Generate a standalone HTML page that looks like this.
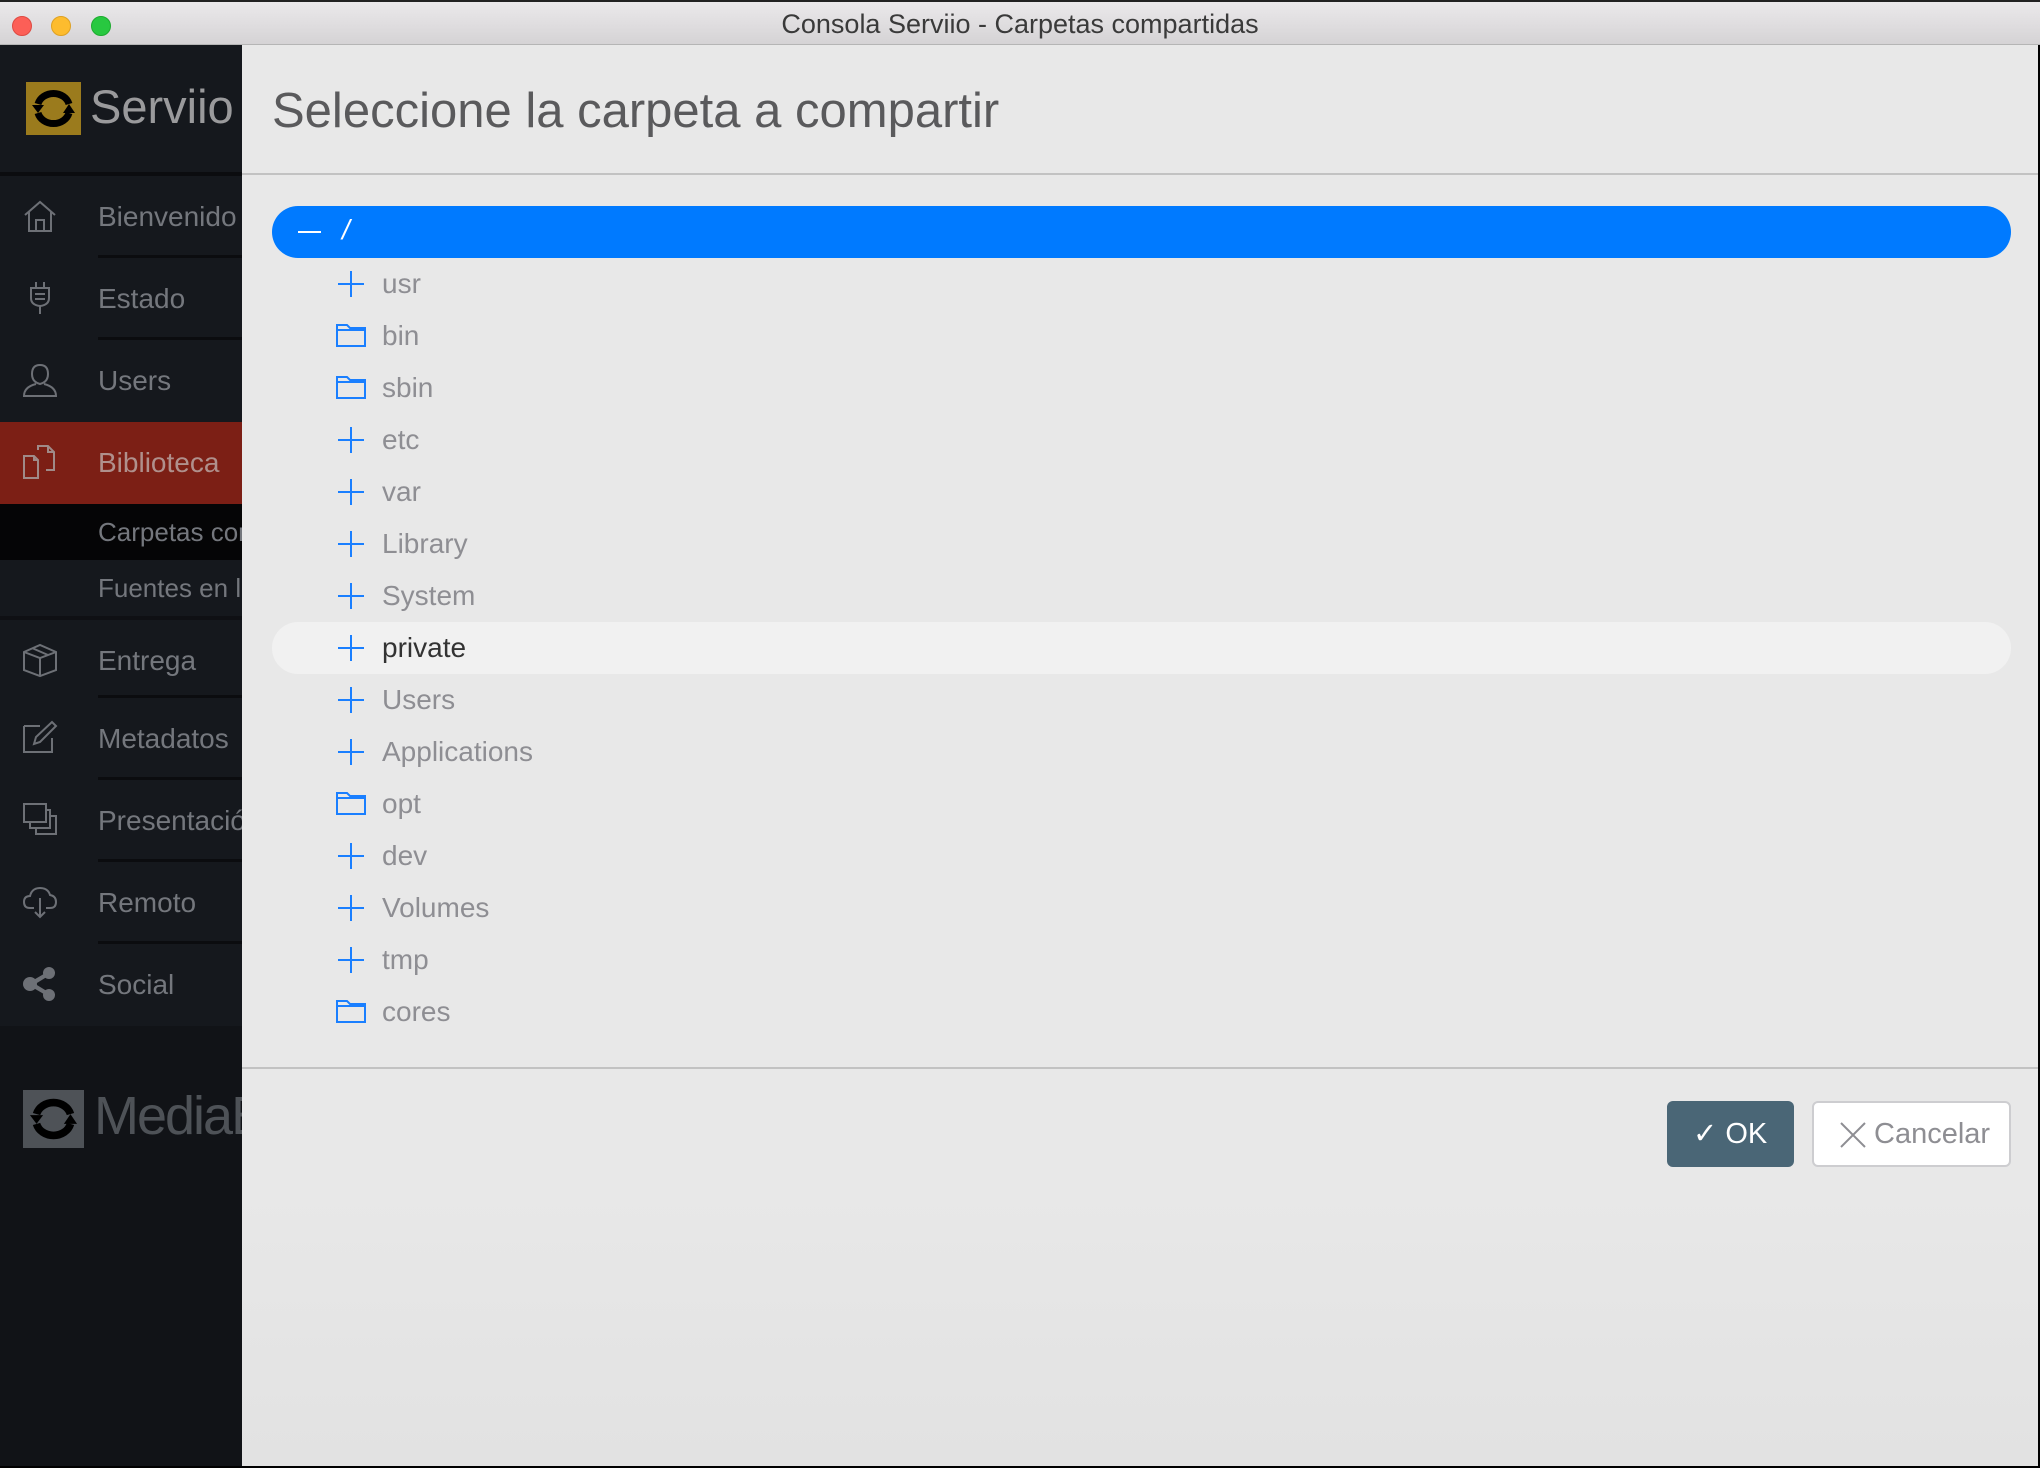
<!DOCTYPE html>
<html><head><meta charset="utf-8">
<style>
*{margin:0;padding:0;box-sizing:border-box}
body{width:2040px;height:1468px;overflow:hidden;background:#000;font-family:"Liberation Sans",sans-serif;position:relative}
.tb{position:absolute;left:0;top:0;width:2040px;height:45px;background:linear-gradient(#ebe9eb,#d5d3d5);border-bottom:1px solid #b5b5b5;border-top:2px solid #222}
.tb .t{position:absolute;left:0;right:0;top:7px;text-align:center;font-size:27px;color:#3a3a3a}
.dot{position:absolute;top:14px;width:20px;height:20px;border-radius:50%}
.side{position:absolute;left:0;top:45px;width:242px;height:1421px;background:#111317;overflow:hidden}
.hdr{position:absolute;left:0;top:0;width:242px;height:131px;background:#15181d;border-bottom:4px solid #0b0c0f}
.logo{position:absolute;left:26px;top:37px;width:55px;height:53px;background:#9b7b1d}
.brand{position:absolute;left:90px;top:34px;font-size:47px;color:#9a9a9c}
.nav{position:absolute;left:0;width:242px;height:82px;background:#15181d}
.nav .sep{position:absolute;left:98px;right:0;bottom:0;height:3px;background:#0b0c0f}
.nav .lbl{position:absolute;left:98px;top:25px;font-size:28px;color:#74777d;white-space:nowrap}
.nav svg{position:absolute;left:22px;top:22px}
.sub{position:absolute;left:0;width:242px;height:56px;background:#15181d}
.sub .lbl{position:absolute;left:98px;top:13px;font-size:26px;color:#74777d;white-space:nowrap}
.main{position:absolute;left:242px;top:45px;width:1796px;height:1421px;background:linear-gradient(#e8e8e8 80%,#e2e2e2)}
h1{position:absolute;left:30px;top:38px;font-weight:normal;font-size:49px;color:#5a5a5c}
.hl{position:absolute;left:0;right:0;height:2px;background:#c2c2c2}
.sel{position:absolute;left:30px;top:161px;width:1739px;height:52px;border-radius:26px;background:#007aff}
.row{position:absolute;left:30px;width:1739px;height:52px;border-radius:26px}
.row .lbl{position:absolute;left:110px;top:10px;font-size:28px;color:#8e8e93}
.row svg{position:absolute;left:64px;top:12px}
.btn{position:absolute;top:1056px;height:66px;border-radius:6px;font-size:29px}
</style></head><body>
<div class="tb">
<div class="dot" style="left:12px;background:#fc5f57;border:1px solid #de4a42"></div>
<div class="dot" style="left:51px;background:#fdbc2e;border:1px solid #dea123"></div>
<div class="dot" style="left:91px;background:#28c840;border:1px solid #1dab2f"></div>
<div class="t">Consola Serviio - Carpetas compartidas</div>
</div>
<div class="side">
<div class="hdr">
<div class="logo"><svg width="55" height="53" viewBox="0 0 55 53"><path d="M12 22 A16 14 0 0 1 43 22" fill="none" stroke="#000" stroke-width="7"/><path d="M43 31 A16 14 0 0 1 12 31" fill="none" stroke="#000" stroke-width="7"/><path d="M6 23 L12 31 L18 23Z M37 31 L43 22 L49 31Z" fill="#000"/></svg></div>
<div class="brand">Serviio</div>
</div>
<div class="nav" style="top:131px"><svg width="36" height="36" viewBox="0 0 36 36" fill="none" stroke="#6d7076" stroke-width="2"><path d="M3 17 L18 4 L33 17 M7 14 V33 H29 V14 M14 33 V22 H22 V33"/></svg><div class="lbl">Bienvenido</div><div class="sep"></div></div>
<div class="nav" style="top:213px"><svg width="36" height="36" viewBox="0 0 36 36" fill="none" stroke="#6d7076" stroke-width="2"><path d="M14 2 V8 M22 2 V8 M9 8 H27 V18 Q27 25 18 26 Q9 25 9 18Z M13 14 H23 M13 19 H23 M18 26 V34"/></svg><div class="lbl">Estado</div><div class="sep"></div></div>
<div class="nav" style="top:295px"><svg width="36" height="36" viewBox="0 0 36 36" fill="none" stroke="#6d7076" stroke-width="2"><path d="M18 3 Q26 3 26 12 Q26 20 18 22 Q10 20 10 12 Q10 3 18 3Z M14 22 Q2 25 2 34 H34 Q34 25 22 22"/></svg><div class="lbl">Users</div></div>
<div class="nav" style="top:377px;background:#7c1f15"><svg width="36" height="36" viewBox="0 0 36 36" fill="none" stroke="#a08a88" stroke-width="2"><path d="M2 12 H12 L16 16 V34 H2Z M12 12 V16 H16 M16 6 V2 H26 L32 8 V26 H24 M26 2 V8 H32"/></svg><div class="lbl" style="color:#b0908c">Biblioteca</div></div>
<div class="sub" style="top:459px;background:#050506"><div class="lbl">Carpetas compartidas</div></div>
<div class="sub" style="top:515px"><div class="lbl">Fuentes en línea</div></div>
<div class="nav" style="top:571px;border-top:4px solid #0f1014"><svg width="36" height="36" viewBox="0 0 36 36" fill="none" stroke="#6d7076" stroke-width="2"><path d="M2 10 L18 3 L34 10 V28 L18 34 L2 28Z M2 10 L18 16 L34 10 M18 16 V34 M10 6 L26 13"/></svg><div class="lbl">Entrega</div><div class="sep"></div></div>
<div class="nav" style="top:653px"><svg width="36" height="36" viewBox="0 0 36 36" fill="none" stroke="#6d7076" stroke-width="2"><path d="M2 6 H18 M2 6 V32 H30 V18 M12 24 L14 17 L30 2 L34 6 L18 22Z"/></svg><div class="lbl">Metadatos</div><div class="sep"></div></div>
<div class="nav" style="top:735px"><svg width="36" height="36" viewBox="0 0 36 36" fill="none" stroke="#6d7076" stroke-width="2"><path d="M2 2 H24 V20 H2Z M24 8 H28 V26 H8 V20 M28 14 H34 V32 H14 V26"/></svg><div class="lbl">Presentación</div><div class="sep"></div></div>
<div class="nav" style="top:817px"><svg width="36" height="36" viewBox="0 0 36 36" fill="none" stroke="#6d7076" stroke-width="2"><path d="M12 24 H8 Q2 24 2 18 Q2 12 8 12 Q10 4 18 4 Q26 4 28 11 Q34 12 34 18 Q34 24 28 24 H24 M18 14 V33 M13 28 L18 33 L23 28"/></svg><div class="lbl">Remoto</div><div class="sep"></div></div>
<div class="nav" style="top:899px"><svg width="36" height="36" viewBox="0 0 36 36" fill="#6d7076"><circle cx="27" cy="7" r="6"/><circle cx="8" cy="18" r="7"/><circle cx="27" cy="29" r="6"/><path d="M8 16 L27 5 L28 9 L10 20Z M8 20 L27 31 L28 27 L10 16Z"/></svg><div class="lbl">Social</div></div>
<div style="position:absolute;left:23px;top:1045px;width:61px;height:58px;background:#4e5257"><svg width="61" height="58" viewBox="0 0 55 53"><path d="M12 22 A16 14 0 0 1 43 22" fill="none" stroke="#000" stroke-width="7"/><path d="M43 31 A16 14 0 0 1 12 31" fill="none" stroke="#000" stroke-width="7"/><path d="M6 23 L12 31 L18 23Z M37 31 L43 22 L49 31Z" fill="#000"/></svg></div>
<div style="position:absolute;left:94px;top:1040px;font-size:54px;color:#4e5257;letter-spacing:-2px;white-space:nowrap">MediaBrowser</div>
</div>
<div class="main">
<h1>Seleccione la carpeta a compartir</h1>
<div class="hl" style="top:128px"></div>
<div class="sel"><div style="position:absolute;left:26px;top:25px;width:23px;height:2px;background:#fff"></div><div style="position:absolute;left:70px;top:8px;font-size:28px;color:#fff;font-style:italic">/</div></div>
<div class="row" style="top:577px;background:#f1f1f1"></div>
<div id="rows"></div>
<div class="hl" style="top:1022px"></div>
<div class="btn" style="left:1425px;width:127px;background:#4a6676;color:#fff"><span style="position:absolute;left:26px;top:15px">✓ OK</span></div>
<div class="btn" style="left:1570px;width:199px;background:#fff;border:2px solid #cdcdd0;color:#8e8e93"><svg style="position:absolute;left:26px;top:19px" width="26" height="26" viewBox="0 0 26 26" stroke="#8e8e93" stroke-width="2"><path d="M1 1 L25 25 M25 1 L1 25"/></svg><span style="position:absolute;left:60px;top:15px">Cancelar</span></div>
</div>
<script>
var names=["usr","bin","sbin","etc","var","Library","System","private","Users","Applications","opt","dev","Volumes","tmp","cores"];
var folders={bin:1,sbin:1,opt:1,cores:1};
var h="";
names.forEach(function(n,i){
var top=213+52*i;
var icon=folders[n]?'<svg width="30" height="26" viewBox="0 0 30 26" fill="none" stroke="#1a7fff" stroke-width="2"><path d="M1 3 H11 L14 6 H29 V24 H1Z M1 8 H29"/></svg>':'<svg width="30" height="28" viewBox="0 0 30 28" stroke="#1a7fff" stroke-width="2"><path d="M2 14 H28 M15 1 V27"/></svg>';
h+='<div class="row" style="top:'+top+'px">'+icon+'<div class="lbl" style="'+(n=="private"?"color:#333":"")+'">'+n+'</div></div>';
});
document.getElementById("rows").innerHTML=h;
</script>
</body></html>
